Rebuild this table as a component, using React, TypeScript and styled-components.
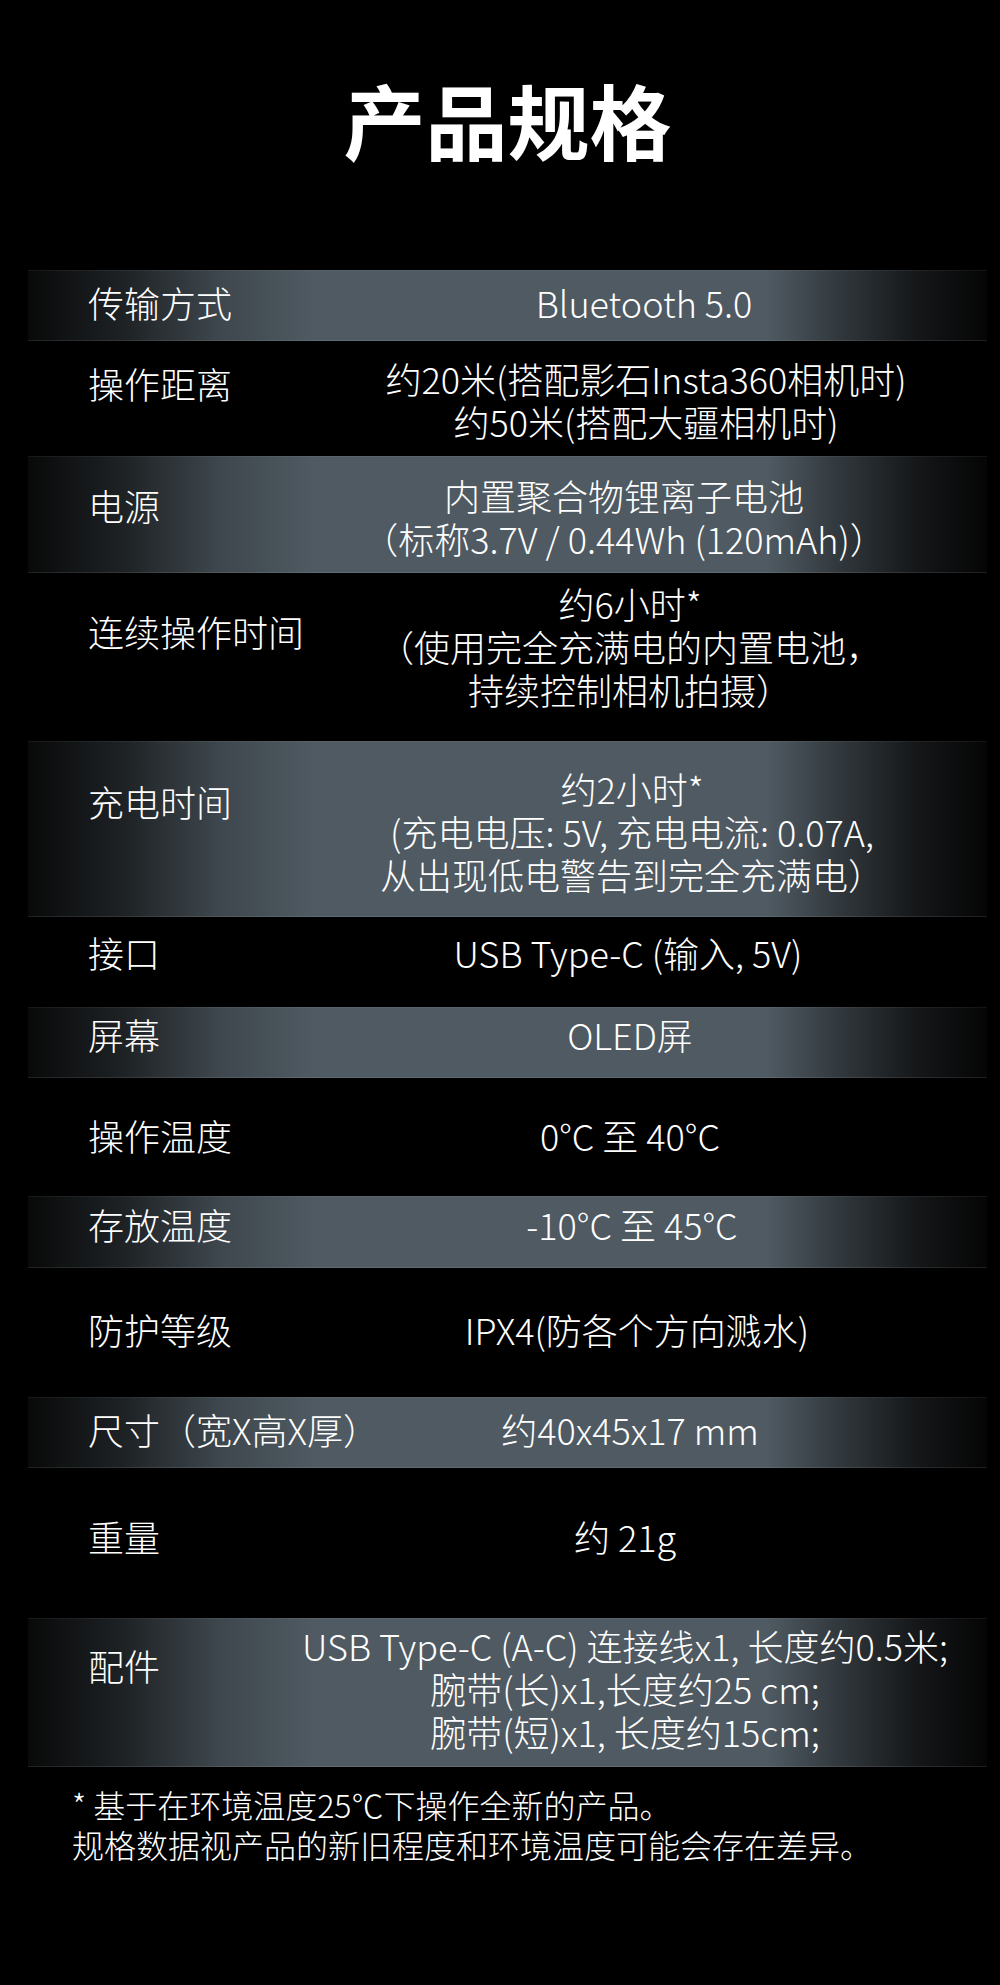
import React from "react";
import styled, { createGlobalStyle } from "styled-components";

const GlobalStyle = createGlobalStyle`
  html, body {
    margin: 0;
    padding: 0;
    background: #000;
  }
`;

const Page = styled.div`
  width: 1000px;
  min-height: 1985px;
  background: #000;
  color: #fff;
  font-family: "Noto Sans CJK SC Light", "Noto Sans CJK SC DemiLight", "Noto Sans CJK SC", "Noto Sans", sans-serif;
  font-weight: 300;
`;

const Header = styled.header`
  height: 270px;
  box-sizing: border-box;
  padding: 0 13px 32px 28px;
  display: flex;
  align-items: center;
  justify-content: center;
`;

const Title = styled.h1`
  margin: 0;
  font-family: "Noto Sans CJK SC", sans-serif;
  font-size: 82px;
  line-height: 1;
  font-weight: 700;
`;

const SpecTable = styled.div`
  margin-left: 28px;
  width: 959px;
  display: flex;
  flex-direction: column;
`;

const Row = styled.div<{ $h: number; $shaded?: boolean }>`
  height: ${(p) => p.$h}px;
  box-sizing: border-box;
  padding: 0 7px 0 60px;
  display: grid;
  grid-template-columns: 196px 1fr;
  align-items: center;
  font-size: 36px;
  line-height: 43px;
  background: ${(p) =>
    p.$shaded
      ? `linear-gradient(to right,
          #080909 0%,
          #1e2225 10%,
          #3e474d 20%,
          #4f5a62 30%,
          #4f5a62 77%,
          #2c3236 86%,
          #141618 93%,
          #050505 100%)`
      : "transparent"};
  box-shadow: ${(p) =>
    p.$shaded
      ? "inset 0 1px 0 rgba(255,255,255,0.06), inset 0 -1px 0 rgba(255,255,255,0.1)"
      : "none"};
`;

const Label = styled.div<{ $lift?: number }>`
  white-space: nowrap;
  margin-bottom: ${(p) => ((p.$lift ?? 0) + 3.5) * 2}px;
`;

// $dx nudges the centred value sideways (positive = right)
const Value = styled.div<{ $lift?: number; $dx?: number }>`
  text-align: center;
  white-space: nowrap;
  margin-bottom: ${(p) => ((p.$lift ?? 0) + 3.5) * 2}px;
  padding-left: ${(p) => Math.max(0, (p.$dx ?? 0) * 2)}px;
  padding-right: ${(p) => Math.max(0, -(p.$dx ?? 0) * 2)}px;
`;

const Footnote = styled.div`
  padding: 17px 0 0 72px;
  font-size: 32px;
  line-height: 40px;
`;

type Spec = {
  label: string;
  lines: string[];
  h: number;
  labelLift?: number;
  valueLift?: number;
  dx?: number;
};

const specs: Spec[] = [
  { label: "传输方式", lines: ["Bluetooth 5.0"], h: 71, dx: 12 },
  {
    label: "操作距离",
    lines: ["约20米(搭配影石Insta360相机时)", "约50米(搭配大疆相机时)"],
    h: 115,
    labelLift: 12,
    valueLift: -5,
    dx: 14,
  },
  {
    label: "电源",
    lines: ["内置聚合物锂离子电池", "（标称3.7V / 0.44Wh (120mAh)）"],
    h: 117,
    labelLift: 6,
    valueLift: -6,
    dx: -8,
  },
  {
    label: "连续操作时间",
    lines: ["约6小时*", "（使用完全充满电的内置电池，", "持续控制相机拍摄）"],
    h: 168,
    labelLift: 22,
    valueLift: 7,
    dx: -2,
  },
  {
    label: "充电时间",
    lines: ["约2小时*", "(充电电压: 5V, 充电电流: 0.07A,", "从出现低电警告到完全充满电）"],
    h: 176,
    labelLift: 24,
    valueLift: -6,
  },
  { label: "接口", lines: ["USB Type-C (输入, 5V)"], h: 90, labelLift: 6, valueLift: 6, dx: -4 },
  { label: "屏幕", lines: ["OLED屏"], h: 71, labelLift: 5, valueLift: 5, dx: -2 },
  { label: "操作温度", lines: ["0°C 至 40°C"], h: 118, labelLift: -2, valueLift: -2, dx: -2 },
  { label: "存放温度", lines: ["-10°C 至 45°C"], h: 72, labelLift: 4, valueLift: 4 },
  { label: "防护等级", lines: ["IPX4(防各个方向溅水)"], h: 129, labelLift: 0, valueLift: 0, dx: 5 },
  { label: "尺寸（宽X高X厚）", lines: ["约40x45x17 mm"], h: 71, labelLift: 0, valueLift: 0, dx: -2 },
  { label: "重量", lines: ["约 21g"], h: 150, labelLift: 3, valueLift: 3, dx: -7 },
  {
    label: "配件",
    lines: [
      "USB Type-C (A-C) 连接线x1, 长度约0.5米;",
      "腕带(长)x1,长度约25 cm;",
      "腕带(短)x1, 长度约15cm;",
    ],
    h: 149,
    labelLift: 24,
    valueLift: 1,
    dx: -7,
  },
];

const App: React.FC = () => {
  return (
    <>
      <GlobalStyle />
      <Page>
        <Header>
          <Title>产品规格</Title>
        </Header>
        <SpecTable>
          {specs.map((spec, i) => (
            <Row key={spec.label} $h={spec.h} $shaded={i % 2 === 0}>
              <Label $lift={spec.labelLift}>{spec.label}</Label>
              <Value $lift={spec.valueLift} $dx={spec.dx}>
                {spec.lines.map((line) => (
                  <div key={line}>{line}</div>
                ))}
              </Value>
            </Row>
          ))}
        </SpecTable>
        <Footnote>
          <div>* 基于在环境温度25℃下操作全新的产品。</div>
          <div>规格数据视产品的新旧程度和环境温度可能会存在差异。</div>
        </Footnote>
      </Page>
    </>
  );
};

export default App;
